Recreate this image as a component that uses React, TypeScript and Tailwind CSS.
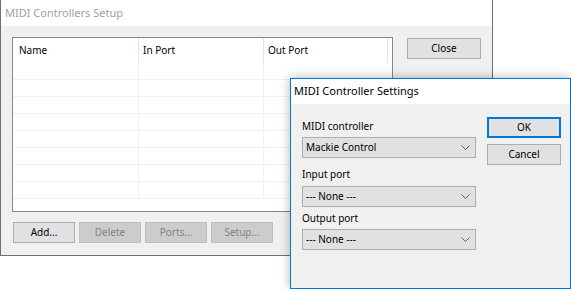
import React from "react";

const font = { fontFamily: '"Noto Sans", "Open Sans", sans-serif' };

const Chevron = () => (
  <svg width="9" height="5" viewBox="0 0 9 5" className="shrink-0">
    <path d="M0.5 0.5 L4.5 4.5 L8.5 0.5" fill="none" stroke="#606060" strokeWidth="1" />
  </svg>
);

const Combo = ({ value }: { value: string }) => (
  <div className="flex items-center justify-between w-[174px] h-[21px] border border-[#adadad] bg-[#e1e1e1] pl-[3px] pr-[5px] text-[10px] text-black">
    <span>{value}</span>
    <Chevron />
  </div>
);

const WinButton = ({ label, disabled }: { label: string; disabled?: boolean }) => (
  <div
    className={
      disabled
        ? "flex items-center justify-center w-[62px] h-[21px] border border-[#bfbfbf] bg-[#cccccc] text-[10px] text-[#838383]"
        : "flex items-center justify-center w-[62px] h-[21px] border border-[#adadad] bg-[#e1e1e1] text-[10px] text-black"
    }
  >
    {label}
  </div>
);

const rows = Array.from({ length: 8 });

export default function App() {
  return (
    <div className="relative w-[571px] h-[289px] overflow-hidden bg-white" style={font}>
      {/* main window */}
      <div className="flex flex-col w-[493px] h-[256px] border-l border-r border-b border-[#6f6f6f]">
        <div className="flex items-center h-[26px] bg-white pl-[4px] text-[11px] text-[#a0a0a0]">
          MIDI Controllers Setup
        </div>
        <div className="flex-1 bg-[#f0f0f0] pt-[11px] pl-[11px]">
          <div className="flex items-start">
            <div className="w-[381px] h-[175px] border border-[#828790] bg-white flex flex-col overflow-hidden">
              <div className="flex h-[25px] shrink-0 text-[10px] text-black">
                <div className="w-[126px] pl-[6px] flex items-center border-r border-[#e5e5e5]">Name</div>
                <div className="w-[125px] pl-[4px] flex items-center border-r border-[#e5e5e5]">In Port</div>
                <div className="w-[124px] pl-[4px] flex items-center border-r border-[#e5e5e5]">Out Port</div>
              </div>
              {rows.map((_, i) => (
                <div key={i} className="flex h-[17px] shrink-0 border-b border-[#f0f0f0]">
                  <div className="w-[126px] border-r border-[#f0f0f0]" />
                  <div className="w-[125px] border-r border-[#f0f0f0]" />
                  <div className="w-[124px]" />
                </div>
              ))}
            </div>
            <div className="ml-[14px] mt-[1px] flex items-center justify-center w-[74px] h-[21px] border border-[#adadad] bg-[#e1e1e1] text-[10px] text-black">
              Close
            </div>
          </div>
          <div className="flex gap-[4px] mt-[10px] ml-[1px]">
            <WinButton label="Add..." />
            <WinButton label="Delete" disabled />
            <WinButton label="Ports..." disabled />
            <WinButton label="Setup..." disabled />
          </div>
        </div>
      </div>

      {/* settings dialog */}
      <div className="absolute left-[290px] top-[78px] w-[281px] h-[211px] border border-[#0078d7] flex flex-col shadow-[0_0_10px_rgba(0,0,0,0.3)]">
        <div className="flex items-center h-[25px] bg-white pl-[3px] text-[11px] text-black">
          MIDI Controller Settings
        </div>
        <div className="flex-1 bg-[#f0f0f0] flex pl-[11px] pt-[14px]">
          <div className="flex flex-col text-[10px] text-black">
            <div className="leading-[16px]">MIDI controller</div>
            <div className="mt-[3px]"><Combo value="Mackie Control" /></div>
            <div className="leading-[16px] mt-[8px]">Input port</div>
            <div className="mt-[4px]"><Combo value="--- None ---" /></div>
            <div className="leading-[16px] mt-[3px]">Output port</div>
            <div className="mt-[3px]"><Combo value="--- None ---" /></div>
          </div>
          <div className="flex flex-col ml-[11px] -mt-[1px]">
            <div className="flex items-center justify-center w-[74px] h-[21px] border-2 border-[#0078d7] bg-[#e1e1e1] text-[10px] text-black">
              OK
            </div>
            <div className="mt-[6px] flex items-center justify-center w-[74px] h-[21px] border border-[#adadad] bg-[#e1e1e1] text-[10px] text-black">
              Cancel
            </div>
          </div>
        </div>
      </div>
    </div>
  );
}
